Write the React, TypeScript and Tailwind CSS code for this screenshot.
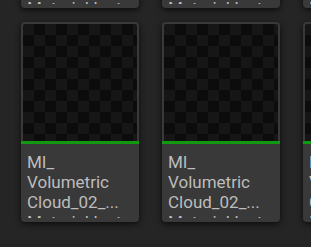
import React from "react";

const assets = [
  { id: 1, lines: ["MI_", "Volumetric", "Cloud_02_..."] },
  { id: 2, lines: ["MI_", "Volumetric", "Cloud_02_..."] },
  { id: 3, lines: ["MI_", "Volumetric", "Cloud_02_..."] },
];

function AssetTile({ lines }: { lines: string[] }) {
  return (
    <div className="w-[118px] h-[200px] shrink-0 rounded-[4px] bg-[#393939] px-[2px] pt-[2px] shadow-[0_2px_6px_rgba(0,0,0,0.7)] flex flex-col overflow-hidden">
      {/* checkerboard thumbnail */}
      <div className="h-[117px] shrink-0 rounded-t-[2px] bg-[conic-gradient(#0c0c0c_25%,#161616_0_50%,#0c0c0c_0_75%,#161616_0)] bg-[length:22px_22px]" />
      <div className="h-[3px] shrink-0 bg-[#129912] -mx-[2px]" />
      {/* name, clipped after the third line */}
      <div className="h-[74px] shrink-0 overflow-hidden px-[4px] pt-[8px] text-[17px] leading-[20px] text-[#bdbdbd] font-['Roboto',sans-serif]">
        {lines.map((l, i) => (
          <div key={i} className="whitespace-nowrap">
            {l}
          </div>
        ))}
        <div className="whitespace-nowrap">Material Instance</div>
      </div>
    </div>
  );
}

export default function App() {
  return (
    <div className="w-[311px] h-[247px] bg-[#252525] overflow-hidden">
      <div className="-mt-[192px] pl-[21px] flex flex-col gap-[14px]">
        {[0, 1].map((row) => (
          <div key={row} className="flex gap-[23px]">
            {assets.map((a) => (
              <AssetTile key={a.id} lines={a.lines} />
            ))}
          </div>
        ))}
      </div>
    </div>
  );
}
